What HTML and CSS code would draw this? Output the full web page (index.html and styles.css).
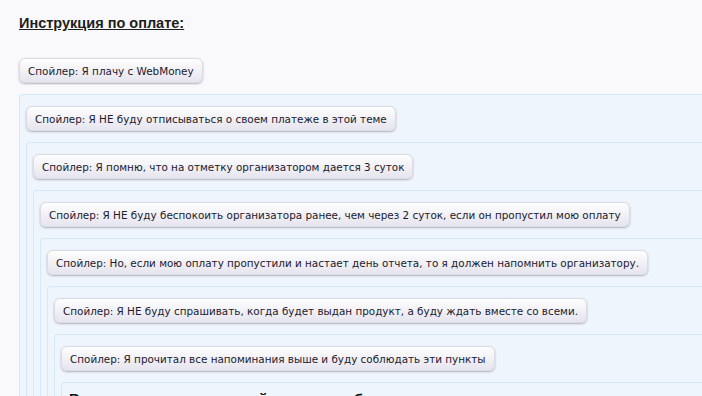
FILE: index.html
```html
<!DOCTYPE html>
<html lang="ru">
<head>
    <meta charset="UTF-8">
    <title>Инструкция по оплате</title>
    <link rel="stylesheet" href="styles.css">
</head>
<body>
    <div class="content">
        <div class="title">Инструкция по оплате:</div>

        <div class="spoiler">
            <button class="spoiler-btn">Спойлер: Я плачу с WebMoney</button>
            <div class="spoiler-body">
                <button class="spoiler-btn">Спойлер: Я НЕ буду отписываться о своем платеже в этой теме</button>
                <div class="spoiler-body">
                    <button class="spoiler-btn">Спойлер: Я помню, что на отметку организатором дается 3 суток</button>
                    <div class="spoiler-body">
                        <button class="spoiler-btn">Спойлер: Я НЕ буду беспокоить организатора ранее, чем через 2 суток, если он пропустил мою оплату</button>
                        <div class="spoiler-body">
                            <button class="spoiler-btn">Спойлер: Но, если мою оплату пропустили и настает день отчета, то я должен напомнить организатору.</button>
                            <div class="spoiler-body">
                                <button class="spoiler-btn">Спойлер: Я НЕ буду спрашивать, когда будет выдан продукт, а буду ждать вместе со всеми.</button>
                                <div class="spoiler-body">
                                    <button class="spoiler-btn">Спойлер: Я прочитал все напоминания выше и буду соблюдать эти пункты</button>
                                    <div class="spoiler-body">
                                        <p class="final">Выполнение этих условий является обязательным</p>
                                    </div>
                                </div>
                            </div>
                        </div>
                    </div>
                </div>
            </div>
        </div>
    </div>
</body>
</html>
```

FILE: styles.css
```css
/* forum post with nested spoilers */
body {
    margin: 0;
    background-color: #f9f9fb;
    font-family: 'Liberation Sans', Arial, sans-serif;
    color: #222;
    overflow: hidden;
}

.content {
    width: 1000px;
    padding: 15px 0 0 19px;
}

.title {
    font-size: 14.5px;
    font-weight: bold;
    line-height: 16px;
    text-decoration: underline;
    color: #1e1e1e;
    margin-bottom: 27px;
}

.spoiler-btn {
    display: block;
    height: 25px;
    padding: 0 8px;
    font-family: 'DejaVu Sans', Verdana, sans-serif;
    font-size: 10.4px;
    color: #1a1a2e;
    background: linear-gradient(#fefefe, #e6e4ee);
    border: 1px solid #dcdbe4;
    border-radius: 6px;
    box-shadow: 0 1px 2px rgba(60, 50, 80, 0.35);
    cursor: pointer;
}

.spoiler-body {
    margin-top: 11px;
    padding: 11px 0 0 6px;
    background-color: #eef5fc;
    border-top: 1px solid #d4e8f9;
    border-left: 1px solid #d4e8f9;
    border-top-left-radius: 4px;
}

.final {
    margin: -4px 0 0;
    padding-left: 1px;
    font-size: 15px;
    font-weight: bold;
    color: #111;
}
```
